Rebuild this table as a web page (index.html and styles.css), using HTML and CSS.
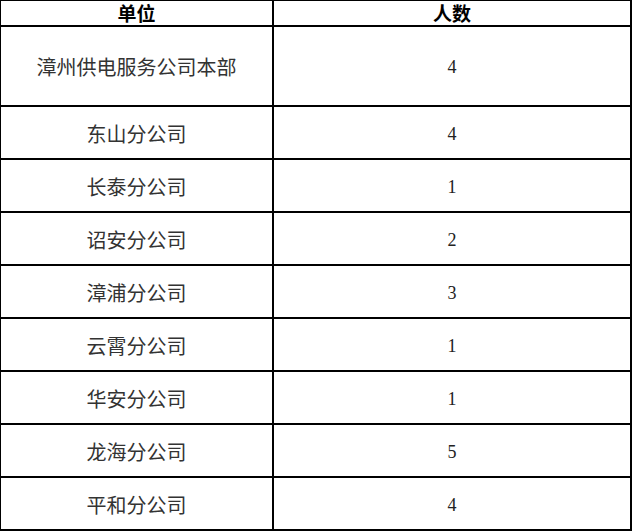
FILE: index.html
```html
<!DOCTYPE html>
<html lang="zh">
<head>
<meta charset="utf-8">
<title>人数统计</title>
<link rel="stylesheet" href="styles.css">
</head>
<body>
<table class="stats">
  <colgroup><col class="col-unit"><col class="col-num"></colgroup>
  <thead>
    <tr class="head-row"><th>单位</th><th>人数</th></tr>
  </thead>
  <tbody>
    <tr class="row-tall"><td>漳州供电服务公司本部</td><td class="num">4</td></tr>
    <tr class="row"><td>东山分公司</td><td class="num">4</td></tr>
    <tr class="row"><td>长泰分公司</td><td class="num">1</td></tr>
    <tr class="row"><td>诏安分公司</td><td class="num">2</td></tr>
    <tr class="row"><td>漳浦分公司</td><td class="num">3</td></tr>
    <tr class="row"><td>云霄分公司</td><td class="num">1</td></tr>
    <tr class="row"><td>华安分公司</td><td class="num">1</td></tr>
    <tr class="row"><td>龙海分公司</td><td class="num">5</td></tr>
    <tr class="row"><td>平和分公司</td><td class="num">4</td></tr>
  </tbody>
</table>
</body>
</html>
```
FILE: styles.css
```css
html, body {
  margin: 0;
  padding: 0;
  background: #fff;
}
.stats {
  border-collapse: separate;
  border-spacing: 0;
  table-layout: fixed;
  width: 632px;
  border-top: 1px solid #000;
  border-left: 1px solid #000;
  font-family: "Noto Sans CJK SC", "Liberation Serif", serif;
  color: #333;
}
.col-unit { width: 273px; }
.col-num { width: 358px; }
.stats th, .stats td {
  border-right: 2px solid #000;
  border-bottom: 2px solid #000;
  padding: 0;
  text-align: center;
  vertical-align: middle;
  font-size: 20px;
  line-height: 24px;
  box-sizing: border-box;
}
.stats td {
  padding-top: 2px;
}
.stats th {
  font-weight: 700;
  color: #000;
  font-size: 19px;
}
.head-row th { height: 26px; }
.row-tall td { height: 80px; }
.row td { height: 53px; }
.stats td.num {
  font-family: "Liberation Serif", serif;
  font-size: 18px;
  color: #222;
}
```
